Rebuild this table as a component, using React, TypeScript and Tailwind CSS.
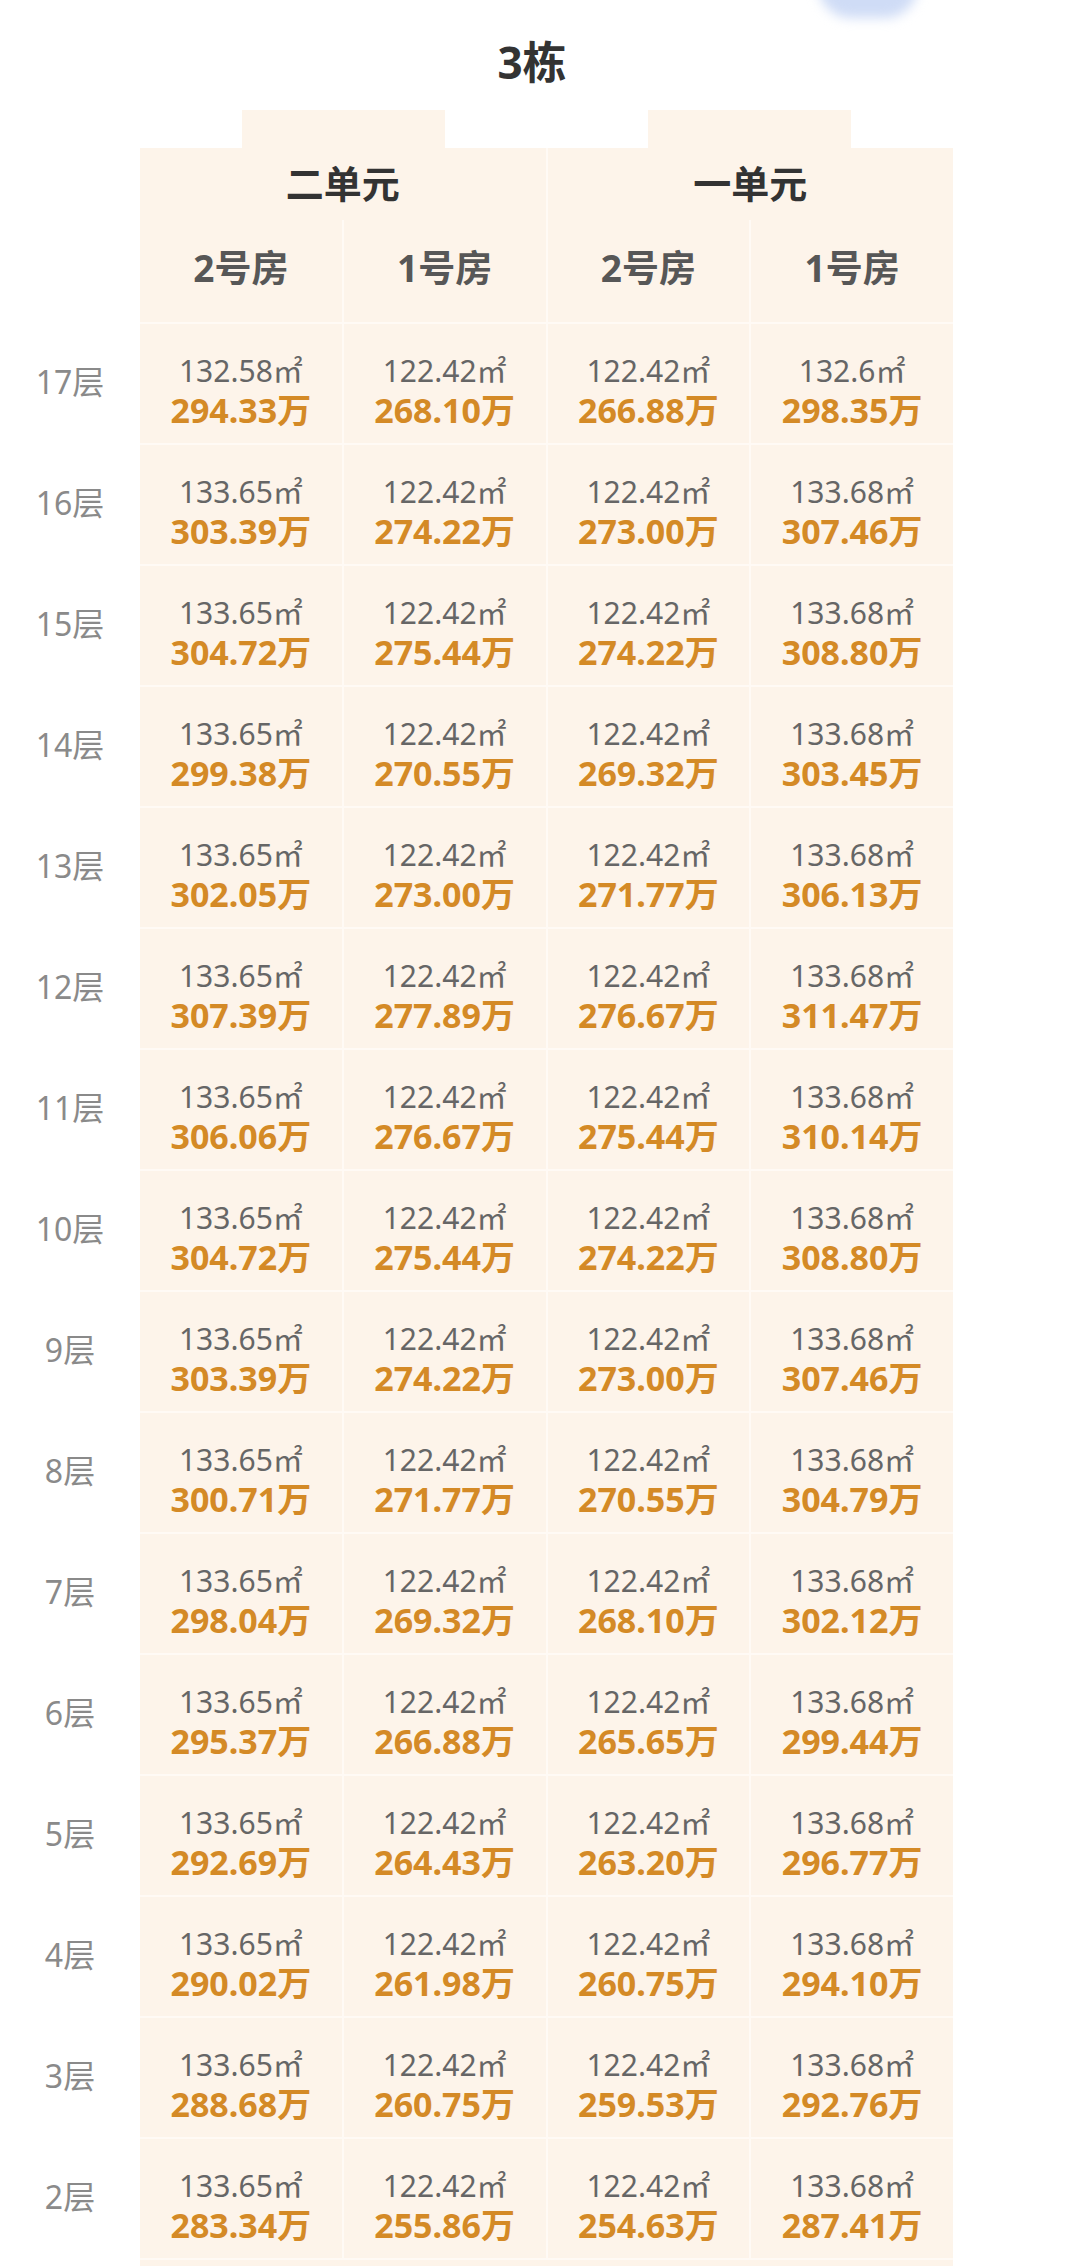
const rows: { floor: string; cells: [string, string][] }[] = [
  { floor: '17层', cells: [['132.58', '294.33'], ['122.42', '268.10'], ['122.42', '266.88'], ['132.6', '298.35']] },
  { floor: '16层', cells: [['133.65', '303.39'], ['122.42', '274.22'], ['122.42', '273.00'], ['133.68', '307.46']] },
  { floor: '15层', cells: [['133.65', '304.72'], ['122.42', '275.44'], ['122.42', '274.22'], ['133.68', '308.80']] },
  { floor: '14层', cells: [['133.65', '299.38'], ['122.42', '270.55'], ['122.42', '269.32'], ['133.68', '303.45']] },
  { floor: '13层', cells: [['133.65', '302.05'], ['122.42', '273.00'], ['122.42', '271.77'], ['133.68', '306.13']] },
  { floor: '12层', cells: [['133.65', '307.39'], ['122.42', '277.89'], ['122.42', '276.67'], ['133.68', '311.47']] },
  { floor: '11层', cells: [['133.65', '306.06'], ['122.42', '276.67'], ['122.42', '275.44'], ['133.68', '310.14']] },
  { floor: '10层', cells: [['133.65', '304.72'], ['122.42', '275.44'], ['122.42', '274.22'], ['133.68', '308.80']] },
  { floor: '9层', cells: [['133.65', '303.39'], ['122.42', '274.22'], ['122.42', '273.00'], ['133.68', '307.46']] },
  { floor: '8层', cells: [['133.65', '300.71'], ['122.42', '271.77'], ['122.42', '270.55'], ['133.68', '304.79']] },
  { floor: '7层', cells: [['133.65', '298.04'], ['122.42', '269.32'], ['122.42', '268.10'], ['133.68', '302.12']] },
  { floor: '6层', cells: [['133.65', '295.37'], ['122.42', '266.88'], ['122.42', '265.65'], ['133.68', '299.44']] },
  { floor: '5层', cells: [['133.65', '292.69'], ['122.42', '264.43'], ['122.42', '263.20'], ['133.68', '296.77']] },
  { floor: '4层', cells: [['133.65', '290.02'], ['122.42', '261.98'], ['122.42', '260.75'], ['133.68', '294.10']] },
  { floor: '3层', cells: [['133.65', '288.68'], ['122.42', '260.75'], ['122.42', '259.53'], ['133.68', '292.76']] },
  { floor: '2层', cells: [['133.65', '283.34'], ['122.42', '255.86'], ['122.42', '254.63'], ['133.68', '287.41']] },
];

const units = ['二单元', '一单元'];
const rooms = ['2号房', '1号房', '2号房', '1号房'];

export default function App() {
  return (
    <div className="relative w-[1080px] h-[2266px] overflow-hidden bg-white font-['Noto_Sans','Noto_Sans_CJK_SC',sans-serif]">
      <div className="absolute left-[818px] top-[-48px] h-[66px] w-[100px] rounded-full bg-[#cfdcf6] blur-[6px]" />

      <h1 className="pt-[32px] pr-[16px] text-center text-[44px] font-bold leading-[60px] text-[#333]">3栋</h1>

      <div className="mt-[18px] flex">
        {/* floor labels */}
        <div className="w-[140px] shrink-0 pt-[212px]">
          <div className="flex flex-col gap-[2px]">
            {rows.map((r) => (
              <div key={r.floor} className="flex h-[119px] items-center justify-center text-[32px] leading-none text-[#8a8a8a]">
                {r.floor}
              </div>
            ))}
          </div>
        </div>

        {/* table */}
        <div className="w-[813px] shrink-0">
          <div className="flex h-[38px]">
            {units.map((u) => (
              <div key={u} className="flex flex-1 justify-center">
                <div className="w-[203px] bg-[#fdf4ea]" />
              </div>
            ))}
          </div>

          <div className="bg-[#fffaf5]">
            <div className="grid h-[72px] grid-cols-2 gap-[2px]">
              {units.map((u) => (
                <div key={u} className="flex items-center justify-center bg-[#fdf4ea] pb-[2px] text-[38px] font-bold leading-none text-[#333]">
                  {u}
                </div>
              ))}
            </div>
            <div className="grid h-[102px] grid-cols-4 gap-[2px]">
              {rooms.map((r, i) => (
                <div key={i} className="flex items-center justify-center bg-[#fdf4ea] pb-[8px] text-[37px] font-bold leading-none text-[#575757]">
                  {r}
                </div>
              ))}
            </div>
            <div className="flex flex-col gap-[2px] pt-[2px]">
              {rows.map((r) => (
                <div key={r.floor} className="grid h-[119px] grid-cols-4 gap-[2px]">
                  {r.cells.map(([area, price], i) => (
                    <div key={i} className="flex flex-col items-center justify-center bg-[#fdf4ea] pt-[12px]">
                      <div className="text-[30px] leading-[38px] text-[#666]">
                        {area}
                        <span className="font-['Noto_Sans_CJK_SC',sans-serif]">㎡</span>
                      </div>
                      <div className="text-[34px] font-bold leading-[40px] text-[#d48a26]">{price}万</div>
                    </div>
                  ))}
                </div>
              ))}
              <div className="h-[8px] bg-[#fdf4ea]" />
            </div>
          </div>
        </div>
      </div>
    </div>
  );
}
